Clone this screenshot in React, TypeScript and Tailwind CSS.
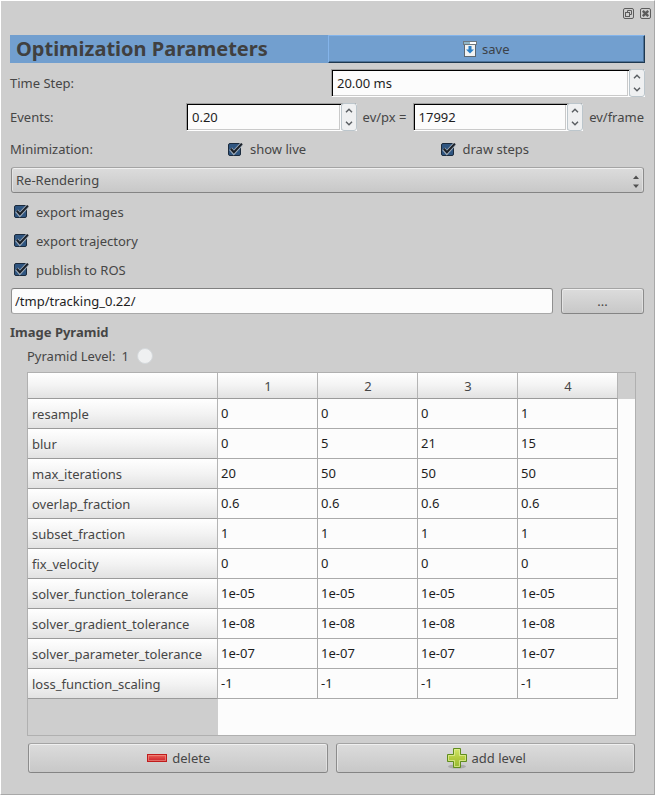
import React from "react";

const LEVELS = ["1", "2", "3", "4"];

const ROWS: { name: string; values: string[] }[] = [
  { name: "resample", values: ["0", "0", "0", "1"] },
  { name: "blur", values: ["0", "5", "21", "15"] },
  { name: "max_iterations", values: ["20", "50", "50", "50"] },
  { name: "overlap_fraction", values: ["0.6", "0.6", "0.6", "0.6"] },
  { name: "subset_fraction", values: ["1", "1", "1", "1"] },
  { name: "fix_velocity", values: ["0", "0", "0", "0"] },
  { name: "solver_function_tolerance", values: ["1e-05", "1e-05", "1e-05", "1e-05"] },
  { name: "solver_gradient_tolerance", values: ["1e-08", "1e-08", "1e-08", "1e-08"] },
  { name: "solver_parameter_tolerance", values: ["1e-07", "1e-07", "1e-07", "1e-07"] },
  { name: "loss_function_scaling", values: ["-1", "-1", "-1", "-1"] },
];

function Chevron({ up }: { up?: boolean }) {
  return (
    <svg width="8" height="5" viewBox="0 0 8 5" fill="none" stroke="#5a5e62" strokeWidth="1.4">
      <path d={up ? "M1 4.3 L4 1.2 L7 4.3" : "M1 0.7 L4 3.8 L7 0.7"} />
    </svg>
  );
}

function SpinBox({ id, value }: { id: string; value: string }) {
  return (
    <div className="flex h-7 w-full border border-t-[#a0a0a0] border-r-white border-b-white border-l-[#a0a0a0]">
      <div className="flex min-w-0 flex-1 border-t border-l border-black bg-[#fcfcfc] pr-px">
        <input
          id={id}
          defaultValue={value}
          className="w-full min-w-0 border-r border-b border-[#cacaca] bg-[#fcfcfc] px-1 text-[#1e1e1e] outline-none"
        />
      </div>
      <div className="-my-px -mr-px flex w-4 flex-col rounded-[3px] border border-[#bcc6cc] bg-[#eff0f1]">
        <button type="button" aria-label="Increase" className="flex flex-1 items-center justify-center">
          <Chevron up />
        </button>
        <button type="button" aria-label="Decrease" className="flex flex-1 items-center justify-center">
          <Chevron />
        </button>
      </div>
    </div>
  );
}

function Check({ label }: { label: string }) {
  return (
    <label className="flex items-center gap-2">
      <span className="grid h-4 w-[14px] items-center">
        <input
          type="checkbox"
          defaultChecked
          className="col-start-1 row-start-1 h-[13px] w-[13px] appearance-none rounded-[2px] border border-[#1c2b3d] bg-[#2f5580]"
        />
        <svg
          className="pointer-events-none col-start-1 row-start-1 overflow-visible"
          width="15"
          height="13"
          viewBox="0 0 15 13"
          fill="none"
        >
          <path d="M2.6 5.8 L5.8 9.6 L13.4 1.2" stroke="#a4b0bc" strokeWidth="3.8" />
          <path d="M2.8 5.8 L5.9 9.3 L14 0.6" stroke="#1a2028" strokeWidth="2.1" />
        </svg>
      </span>
      {label}
    </label>
  );
}

function PushButton({ children, className }: { children: React.ReactNode; className: string }) {
  return (
    <button
      type="button"
      className={
        "flex items-center justify-center rounded-[3px] border border-t-[#a4a4a4] border-r-[#8c8c8c] border-b-[#848484] border-l-[#8c8c8c] bg-linear-to-b from-[#dcdcdc] to-[#c8c8c8] shadow-[inset_0_1px_0_#f0f0f0,inset_1px_0_0_#e4e4e4,inset_-1px_0_0_#e0e0e0] " +
        className
      }
    >
      {children}
    </button>
  );
}

function SaveIcon() {
  return (
    <svg width="14" height="16" viewBox="0 0 14 16">
      <rect x="1.5" y="2.5" width="11" height="13" fill="#f2f2f2" stroke="#5c6670" />
      <rect x="0.5" y="0.5" width="13" height="3" fill="#ffffff" stroke="#6f7880" />
      <rect x="1" y="1" width="6" height="2" fill="#8fb6c8" />
      <path d="M5.5 5 h3 v3.5 h2.5 L7 12.5 L3 8.5 h2.5 z" fill="#2c7fc4" />
    </svg>
  );
}

function MinusIcon() {
  return (
    <svg width="20" height="20" viewBox="0 0 20 20">
      <defs>
        <linearGradient id="minusFill" x1="0" y1="0" x2="0" y2="1">
          <stop offset="0" stopColor="#ee6a5c" />
          <stop offset="0.5" stopColor="#dc4040" />
          <stop offset="1" stopColor="#c8222a" />
        </linearGradient>
      </defs>
      <rect x="0.5" y="6.5" width="19" height="7" fill="url(#minusFill)" stroke="#c01c1c" />
      <rect x="1.5" y="7.5" width="17" height="5" fill="none" stroke="#f0988c" strokeOpacity="0.6" />
    </svg>
  );
}

function PlusIcon() {
  return (
    <svg width="20" height="22" viewBox="0 0 20 22">
      <defs>
        <linearGradient id="plusFill" x1="0" y1="0" x2="0" y2="1">
          <stop offset="0" stopColor="#d2e86c" />
          <stop offset="0.5" stopColor="#b4cc40" />
          <stop offset="1" stopColor="#94b830" />
        </linearGradient>
      </defs>
      <ellipse cx="10" cy="19.5" rx="9" ry="2" fill="#8c8c8c" fillOpacity="0.5" />
      <path
        d="M6.5 1.5 h7 v6 h6 v7 h-6 v6 h-7 v-6 h-6 v-7 h6 z"
        fill="url(#plusFill)"
        stroke="#5f8c1e"
      />
      <path
        d="M7.5 2.5 h5 v6 h6 v5 h-6 v6 h-5 v-6 h-6 v-5 h6 z"
        fill="none"
        stroke="#e2f09c"
        strokeOpacity="0.7"
      />
    </svg>
  );
}

const headFill = "bg-linear-to-b from-white via-[#f3f3f3] to-[#e2e2e2]";

export default function App() {
  return (
    <main className="flex min-h-screen flex-col border border-t-white border-r-[#a8a8a8] border-b-[#a8a8a8] border-l-white bg-[#cecece] pr-[9px] pb-5 pl-[9px] font-['Noto_Sans',sans-serif] text-[13px] leading-4 text-[#464646]">
      <div className="-mr-[6px] flex h-[34px] justify-end gap-[6px] pt-[7px]">
        <button type="button" aria-label="Float" className="h-[11px] w-[11px]">
          <svg width="11" height="11" viewBox="0 0 11 11" fill="none" stroke="#5c5c5c">
            <rect x="0.5" y="0.5" width="10" height="10" rx="1.5" />
            <rect x="2.5" y="4.5" width="4" height="4" />
            <path d="M4.5 4 V2.5 H8.5 V6.5 H7" />
          </svg>
        </button>
        <button type="button" aria-label="Close" className="h-[11px] w-[11px]">
          <svg width="11" height="11" viewBox="0 0 11 11" fill="none" stroke="#5c5c5c">
            <rect x="0.5" y="0.5" width="10" height="10" rx="1.5" />
            <path d="M2.8 2.8 L8.2 8.2 M8.2 2.8 L2.8 8.2" strokeWidth="2.4" />
          </svg>
        </button>
      </div>

      <div className="flex flex-col gap-[6px]">
        <header className="grid h-7 grid-cols-2 bg-[#729fcf]">
          <h1 className="flex items-center pl-[6px] text-xl leading-7 font-bold whitespace-nowrap text-[#404040]">
            Optimization Parameters
          </h1>
          <button
            type="button"
            className="flex items-center justify-center gap-[5px] border border-t-[#84b4ea] border-r-[#1e3850] border-b-[#1e3850] border-l-[#84b4ea] text-[#3c4248] shadow-[inset_-1px_-1px_0_#4c7299]"
          >
            <SaveIcon />
            save
          </button>
        </header>

        <div className="flex items-center">
          <label htmlFor="time-step" className="flex-1">
            Time Step:
          </label>
          <div className="w-[314px]">
            <SpinBox id="time-step" value="20.00 ms" />
          </div>
        </div>

        <div className="flex items-center">
          <label htmlFor="events-px" className="w-44">
            Events:
          </label>
          <div className="min-w-0 flex-1">
            <SpinBox id="events-px" value="0.20" />
          </div>
          <label htmlFor="events-frame" className="px-[6px] whitespace-nowrap">
            ev/px =
          </label>
          <div className="min-w-0 flex-1">
            <SpinBox id="events-frame" value="17992" />
          </div>
          <span className="px-[6px] pr-px">ev/frame</span>
        </div>

        <div className="flex h-6 items-center">
          <span className="w-[218px]">Minimization:</span>
          <div className="grid flex-1 grid-cols-2">
            <Check label="show live" />
            <div className="pl-1">
              <Check label="draw steps" />
            </div>
          </div>
        </div>

        <div className="grid pr-px pl-px">
          <select
            aria-label="Minimization method"
            className="col-start-1 row-start-1 h-[26px] w-full appearance-none rounded-[3px] border border-t-[#a4a4a4] border-r-[#8c8c8c] border-b-[#848484] border-l-[#8c8c8c] bg-linear-to-b from-[#dcdcdc] to-[#c8c8c8] px-1 shadow-[inset_0_1px_0_#f0f0f0,inset_1px_0_0_#e4e4e4,inset_-1px_0_0_#e0e0e0]"
          >
            <option>Re-Rendering</option>
          </select>
          <svg
            className="pointer-events-none col-start-1 row-start-1 mt-2 mr-[5px] justify-self-end"
            width="6"
            height="13"
            viewBox="0 0 6 13"
            fill="#505050"
          >
            <path d="M0 4 L3 0.5 L6 4 z M0 9.5 L3 13 L6 9.5 z" />
          </svg>
        </div>

        <div className="flex flex-col gap-[6px] py-px pl-1">
          {["export images", "export trajectory", "publish to ROS"].map((label) => (
            <div key={label} className="flex h-[23px] items-center">
              <Check label={label} />
            </div>
          ))}
        </div>

        <div className="flex gap-2 px-px">
          <input
            aria-label="Output directory"
            defaultValue="/tmp/tracking_0.22/"
            className="h-[26px] min-w-0 flex-1 rounded-[3px] border border-t-[#808080] border-r-[#909090] border-b-[#a8a8a8] border-l-[#909090] bg-[#fcfcfc] px-[3px] text-[#1e1e1e] outline-none"
          />
          <PushButton className="h-[26px] w-[83px]">...</PushButton>
        </div>

        <h2 className="h-6 leading-6 font-bold">Image Pyramid</h2>
      </div>

      <section className="mt-1 mr-[9px] ml-[17px]">
        <div className="mb-2 flex h-4 items-center">
          <label htmlFor="pyramid-level">Pyramid Level:</label>
          <output className="w-[22px] pl-[6px]">1</output>
          <input
            id="pyramid-level"
            type="range"
            className="h-4 w-4 appearance-none bg-transparent [&::-webkit-slider-thumb]:h-4 [&::-webkit-slider-thumb]:w-4 [&::-webkit-slider-thumb]:appearance-none [&::-webkit-slider-thumb]:rounded-full [&::-webkit-slider-thumb]:border [&::-webkit-slider-thumb]:border-[#d4d8db] [&::-webkit-slider-thumb]:bg-[#eff0f1]"
          />
        </div>

        <div className="border border-[#b0b0b0] bg-[#fcfcfc]">
          <table className="w-full table-fixed border-separate border-spacing-0">
            <colgroup>
              <col className="w-[190px]" />
              <col className="w-[100px]" />
              <col className="w-[100px]" />
              <col className="w-[100px]" />
              <col className="w-[100px]" />
              <col />
            </colgroup>
            <thead>
              <tr className="h-[26px]">
                <td className={`border-r border-b border-r-[#b4b4b4] border-b-[#9a9a9a] ${headFill}`} />
                {LEVELS.map((level) => (
                  <th
                    key={level}
                    scope="col"
                    className={`border-r border-b border-r-[#b4b4b4] border-b-[#9a9a9a] p-0 pl-px font-normal ${headFill}`}
                  >
                    {level}
                  </th>
                ))}
                <td className="bg-[#cecece]" />
              </tr>
            </thead>
            <tbody>
              {ROWS.map((row) => (
                <tr key={row.name} className="h-[30px]">
                  <th
                    scope="row"
                    className={`border-r border-b border-r-[#b4b4b4] border-b-[#9a9a9a] p-0 pl-1 text-left font-normal whitespace-nowrap ${headFill}`}
                  >
                    {row.name}
                  </th>
                  {row.values.map((value, i) => (
                    <td key={i} className="border-r border-b border-[#aaaaaa] p-0 pb-[2px] pl-[3px] text-[#1e1e1e]">
                      {value}
                    </td>
                  ))}
                  <td />
                </tr>
              ))}
              <tr className="h-9">
                <td className="bg-[#cecece]" />
                <td colSpan={5} />
              </tr>
            </tbody>
          </table>
        </div>

        <div className="mt-[7px] grid grid-cols-2 gap-2 px-px">
          <PushButton className="h-[30px] gap-[5px] pl-[2px]">
            <MinusIcon />
            delete
          </PushButton>
          <PushButton className="h-[30px] gap-[5px] pl-[2px]">
            <PlusIcon />
            add level
          </PushButton>
        </div>
      </section>
    </main>
  );
}
